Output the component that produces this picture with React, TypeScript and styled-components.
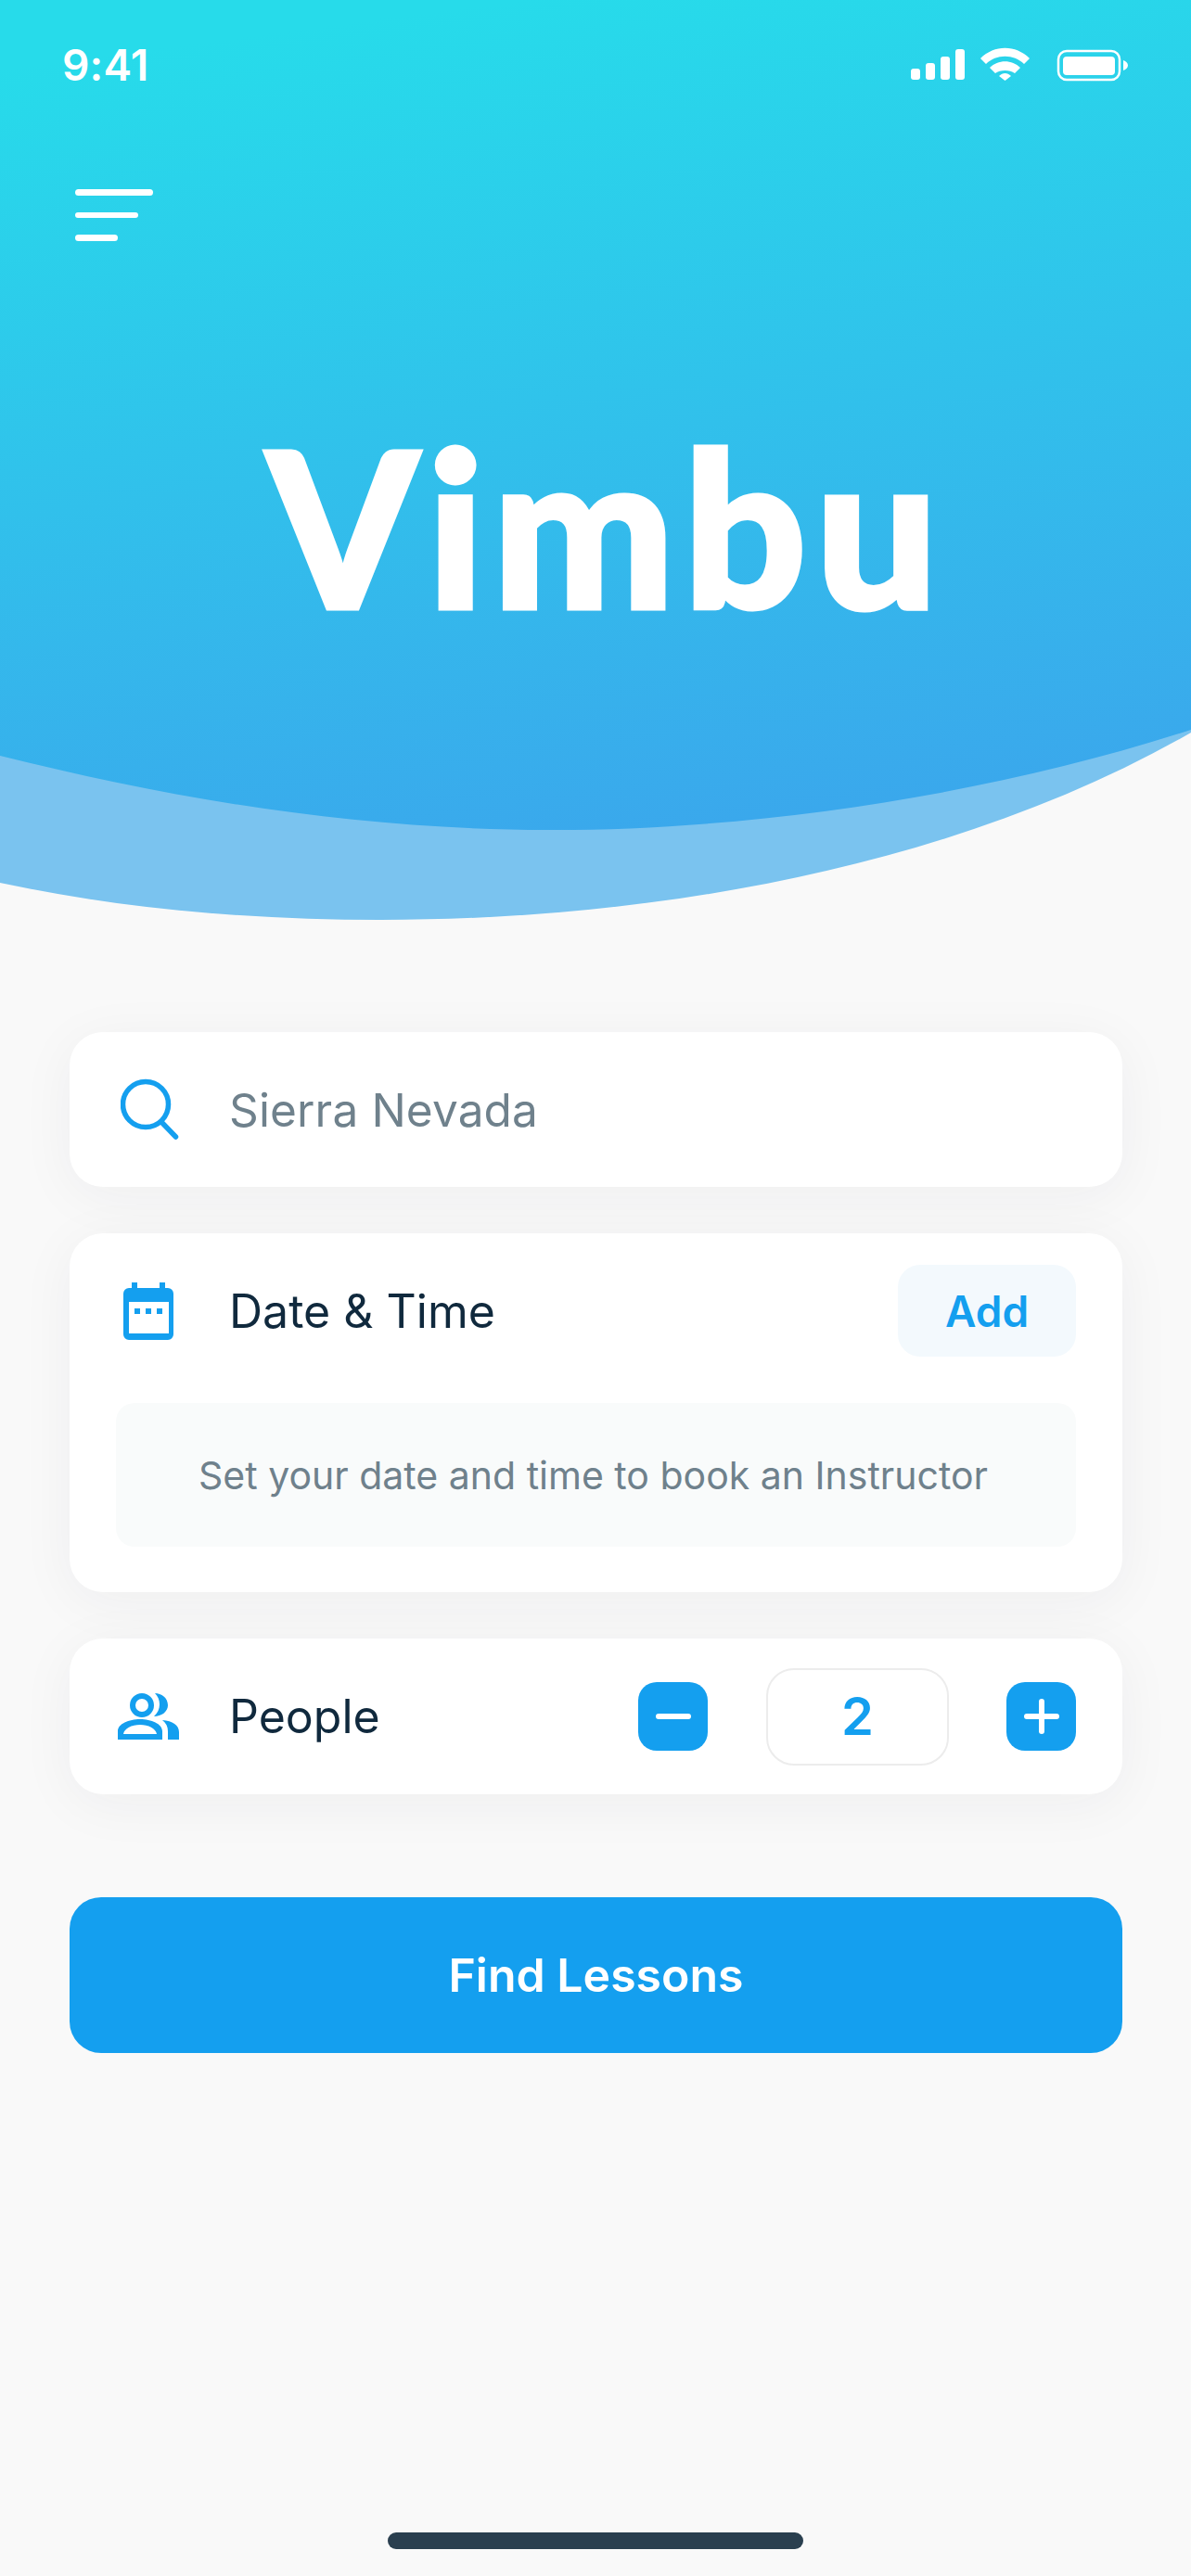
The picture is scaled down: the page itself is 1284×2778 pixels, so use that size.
import React from "react";
import styled, { createGlobalStyle } from "styled-components";

const Global = createGlobalStyle`
  html, body { margin: 0; padding: 0; background: #f9f9f9; }
  * { box-sizing: border-box; }
`;
const Screen = styled.div`
  position: relative; width: 1284px; height: 2778px; background: #f9f9f9; overflow: hidden;
  font-family: Inter, "Liberation Sans", sans-serif;
`;
const Hero = styled.header`
  position: relative; height: 1000px;
`;
const HeroArt = styled.svg`
  position: absolute; left: 0; top: 0; width: 1284px; height: 1000px;
`;
const HeroContent = styled.div`
  position: relative; display: flex; flex-direction: column; height: 100%;
`;
const StatusBar = styled.div`
  height: 140px; padding: 42px 67px 0 67px; display: flex; justify-content: space-between; align-items: flex-start;
`;
const StatusIcons = styled.svg`
  margin-top: 8px;
`;
const Time = styled.span`
  font-size: 46px; line-height: 56px; font-weight: 600; color: #fff; letter-spacing: 0.2px;
`;
const MenuBtn = styled.div`
  margin: 64px 0 0 81px; width: 84px; display: flex; flex-direction: column; gap: 18px; height: 56px;
`;
const MenuLine = styled.span<{ $w: number }>`
  display: block; height: 7px; border-radius: 4px; background: #fff; width: ${p => p.$w}px;
`;
const Logo = styled.h1`
  margin: 0; position: absolute; left: 0; right: 0; top: 436px; padding-left: 25px; text-align: center;
  color: #fff; font-family: Lato, sans-serif; font-weight: 900; font-size: 232px; line-height: 260px; letter-spacing: 10px;
  -webkit-text-stroke: 5px #fff;
`;
const Main = styled.main`
  padding: 113px 74px 0 75px; display: flex; flex-direction: column;
`;
const Card = styled.section`
  background: #fff; border-radius: 36px; box-shadow: 0 10px 60px rgba(30, 40, 50, 0.05);
  margin-bottom: 50px;
`;
const Row = styled.div<{ $h: number }>`
  height: ${p => p.$h}px; display: flex; align-items: center; padding: 0 50px;
`;
const IconSlot = styled.div<{ $x: number }>`
  width: 122px; flex: none; display: flex; align-items: center; padding-left: ${p => p.$x}px;
`;
const Placeholder = styled.span`
  font-size: 49.5px; color: #6f818c; letter-spacing: 0.15px;
`;
const Label = styled.span`
  font-size: 50px; color: #10293d; flex: 1; letter-spacing: 0;
`;
const AddBtn = styled.div`
  width: 192px; height: 99px; border-radius: 24px; background: #f3f9fd; color: #149fef;
  font-size: 46px; font-weight: 600; display: flex; align-items: center; justify-content: center;
`;
const Notice = styled.div`
  margin: 16px 50px 49px; padding-right: 6px; height: 155px; background: #f9fbfb; border-radius: 20px; color: #6f818c;
  font-size: 41px; display: flex; align-items: center; justify-content: center;
`;
const Stepper = styled.div`
  display: flex; align-items: center;
`;
const StepBtn = styled.div`
  width: 75px; height: 74px; border-radius: 20px; background: #149fef; display: flex; align-items: center; justify-content: center;
`;
const Count = styled.div`
  width: 197px; height: 105px; margin: 0 62px 0 63px; border: 2.5px solid #ececec; border-radius: 30px;
  color: #149fef; font-size: 56px; font-weight: 600; display: flex; align-items: center; justify-content: center;
`;
const Primary = styled.div`
  margin-top: 61px; height: 168px; border-radius: 34px; background: #149fef; color: #fff;
  font-size: 50px; font-weight: 600; display: flex; align-items: center; justify-content: center;
`;
const HomeBar = styled.div`
  position: absolute; left: 418px; top: 2731px; width: 448px; height: 18px; border-radius: 9px; background: #2a3f4f;
`;

export default function App() {
  return (
    <Screen>
      <Global />
      <Hero>
        <HeroArt viewBox="0 0 1284 1000">
          <defs>
            <linearGradient id="hero" gradientUnits="userSpaceOnUse" x1="560" y1="0" x2="680" y2="900">
              <stop offset="0" stopColor="#27dbea" />
              <stop offset="1" stopColor="#3aa8ec" />
            </linearGradient>
          </defs>
          <path d="M0 0H1284V790C1040 930 720 992 410 992C270 992 130 980 0 952Z" fill="#7ac3ef" />
          <path d="M0 0H1284V787C1060 860 800 896 590 895C380 895 180 860 0 815Z" fill="url(#hero)" />
        </HeroArt>
        <HeroContent>
          <StatusBar>
            <Time>9:41</Time>
            <StatusIcons width="235" height="40" viewBox="983 50 235 40" fill="#fff">
              <rect x="983" y="74" width="10" height="12" rx="3" />
              <rect x="999" y="68" width="10" height="18" rx="3" />
              <rect x="1015" y="61" width="10" height="25" rx="3" />
              <rect x="1031" y="53" width="10" height="33" rx="3" />
              <path d="M1058 63C1073 48 1096 48 1111 63L1105 69C1094 58 1075 58 1064 69Z" />
              <path d="M1068 73C1077 64 1092 64 1101 73L1095 79C1090 75 1079 75 1074 79Z" />
              <path d="M1078 82C1082 78 1087 78 1091 82L1084.5 87Z" />
              <rect x="1142" y="55" width="66" height="31" rx="9" fill="none" stroke="#fff" strokeWidth="2.5" />
              <rect x="1147" y="61" width="56" height="20" rx="4" />
              <path d="M1212 65C1215 66 1217 68 1217 70.5C1217 73 1215 75 1212 76Z" />
            </StatusIcons>
          </StatusBar>
          <MenuBtn>
            <MenuLine $w={84} />
            <MenuLine $w={68} />
            <MenuLine $w={46} />
          </MenuBtn>
          <Logo>Vimbu</Logo>
        </HeroContent>
      </Hero>
      <Main>
        <Card>
          <Row $h={167}>
            <IconSlot $x={5}>
              <svg width="64" height="68" viewBox="0 0 64 68" fill="none" stroke="#149fef" strokeWidth="5.5" strokeLinecap="round">
                <circle cx="27" cy="28" r="24.5" />
                <path d="M45 48L59.5 63" />
              </svg>
            </IconSlot>
            <Placeholder>Sierra Nevada</Placeholder>
          </Row>
        </Card>
        <Card>
          <Row $h={167}>
            <IconSlot $x={8}>
              <svg width="54" height="62" viewBox="0 0 54 62" fill="#149fef">
                <path fillRule="evenodd" d="M6 6H48A6 6 0 0 1 54 12V56A6 6 0 0 1 48 62H6A6 6 0 0 1 0 56V12A6 6 0 0 1 6 6ZM6 21V55H49V21Z" />
                <rect x="9" y="0" width="6" height="8" />
                <rect x="39" y="0" width="6" height="8" />
                <rect x="12" y="28" width="6" height="6" />
                <rect x="24" y="28" width="6" height="6" />
                <rect x="36" y="28" width="6" height="6" />
              </svg>
            </IconSlot>
            <Label>Date &amp; Time</Label>
            <AddBtn>Add</AddBtn>
          </Row>
          <Notice>Set your date and time to book an Instructor</Notice>
        </Card>
        <Card>
          <Row $h={168}>
            <IconSlot $x={2}>
              <svg width="66" height="50" viewBox="0 0 66 50" fill="#149fef">
                <path fillRule="evenodd" d="M26 0a13 13 0 1 1 0 26a13 13 0 0 1 0-26ZM26 6a7 7 0 1 0 0 14a7 7 0 0 0 0-14Z" />
                <path d="M40 0C47 0 54 5 54 13C54 20 47 25 39 25C43 21 45 17 45 12C45 7 43 3 40 0Z" />
                <path fillRule="evenodd" d="M0 50V41C0 33 12 28 24 28C36 28 48 33 48 41V50ZM6 44H42C41 38 33 34 24 34C15 34 7 38 6 44Z" />
                <path d="M48 29C59 30 66 34 66 42V50H54V41C54 36 52 32 48 29Z" />
              </svg>
            </IconSlot>
            <Label>People</Label>
            <Stepper>
              <StepBtn>
                <svg width="38" height="6" viewBox="0 0 38 6"><rect width="38" height="6" rx="3" fill="#fff" /></svg>
              </StepBtn>
              <Count>2</Count>
              <StepBtn>
                <svg width="38" height="38" viewBox="0 0 38 38" fill="#fff">
                  <rect y="16" width="38" height="6" rx="3" />
                  <rect x="16" width="6" height="38" rx="3" />
                </svg>
              </StepBtn>
            </Stepper>
          </Row>
        </Card>
        <Primary>Find Lessons</Primary>
      </Main>
      <HomeBar />
    </Screen>
  );
}
